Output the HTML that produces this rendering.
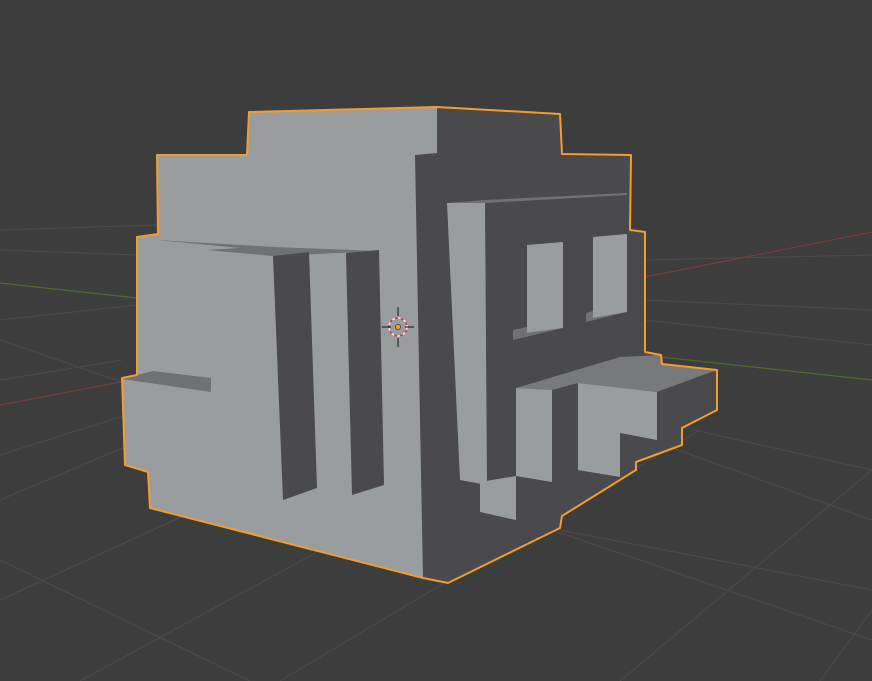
<!DOCTYPE html>
<html><head><meta charset="utf-8"><style>
html,body{margin:0;padding:0;background:#3d3d3d;}
svg{display:block}
</style></head><body>
<svg width="872" height="681" viewBox="0 0 872 681" xmlns="http://www.w3.org/2000/svg">
<rect width="872" height="681" fill="#3d3d3d"/>
<g stroke="#4b4b4b" stroke-width="1" fill="none">
<line x1="0" y1="500" x2="400" y2="330"/>
<line x1="0" y1="455" x2="300" y2="360"/>
<line x1="0" y1="600" x2="480" y2="380"/>
<line x1="80" y1="681" x2="560" y2="420"/>
<line x1="280" y1="681" x2="700" y2="430"/>
<line x1="620" y1="681" x2="872" y2="470"/>
<line x1="820" y1="681" x2="872" y2="610"/>
<line x1="0" y1="340" x2="872" y2="640"/>
<line x1="0" y1="560" x2="250" y2="681"/>
<line x1="650" y1="420" x2="872" y2="470"/>
<line x1="650" y1="440" x2="872" y2="520"/>
<line x1="560" y1="530" x2="872" y2="590"/>
<line x1="645" y1="300" x2="872" y2="310"/>
<line x1="645" y1="320" x2="872" y2="345"/>
<line x1="645" y1="260" x2="872" y2="255"/>
<line x1="0" y1="250" x2="137" y2="255"/>
<line x1="0" y1="320" x2="137" y2="305"/>
<line x1="0" y1="380" x2="122" y2="360"/>
<line x1="0" y1="230" x2="157" y2="225"/>
</g>
<line x1="0" y1="405" x2="210" y2="365" stroke="#7a3a3f" stroke-width="1.2"/>
<line x1="645" y1="277" x2="872" y2="232" stroke="#7a3a3f" stroke-width="1.2"/>
<line x1="0" y1="283" x2="137" y2="298" stroke="#4f6a2e" stroke-width="1.2"/>
<line x1="578" y1="348" x2="872" y2="380" stroke="#4f6a2e" stroke-width="1.2"/>

<!-- dark base (whole silhouette) -->
<polygon fill="#4a494b" points="249,112 437,107 560,114 562,154 631,155 630,230 645,232 645,352 661,355 662,364 717,370 717,410 682,428 682,445 636,462 636,470 562,516 560,528 448,583 423,578 150,508 148,472 125,465 122,378 137,375 137,237 158,234 157,155 247,155"/>
<!-- light left face -->
<polygon fill="#9a9d9f" points="249,112 437,107 437,153 415,155 423,578 150,508 148,472 125,465 122,378 137,375 137,237 158,234 157,155 247,155"/>
<!-- ledge shadows left -->
<polygon fill="#6f7173" points="156,240 275,247 378,251 382,251 273,256 206,250 240,248"/>
<polygon fill="#6f7173" points="122,379 153,371 211,378 211,392"/>
<!-- slots -->
<polygon fill="#4a494b" points="273,256 309,252 317,488 283,500"/>
<polygon fill="#4a494b" points="346,253 379,250 384,485 352,495"/>
<!-- right side pillar -->
<polygon fill="#6f7173" points="447,203 485,200 627,193 627,195 485,203"/>
<polygon fill="#9a9d9f" points="447,203 485,203 487,485 460,480"/>
<!-- windows -->
<polygon fill="#9a9d9f" points="527,245 563,242 563,328 527,333"/>
<polygon fill="#9a9d9f" points="593,237 627,234 627,312 593,318"/>
<polygon fill="#6f7173" points="513,330 527,327 527,333 563,328 513,340"/>
<polygon fill="#6f7173" points="586,313 593,311 593,318 627,312 586,322"/>
<!-- lower box -->
<polygon fill="#77797b" points="516,388 620,357 661,355 662,364 717,370 657,392 578,383 552,390"/>
<polygon fill="#4a494b" points="657,392 717,370 717,410 682,428 657,440"/>
<polygon fill="#9a9d9f" points="516,388 552,390 552,482 516,476"/>
<polygon fill="#9a9d9f" points="578,383 657,392 657,440 620,433 620,477 578,470"/>
<polygon fill="#9a9d9f" points="480,482 516,476 516,520 480,512"/>
<!-- outline -->
<polygon fill="none" stroke="#f29d2e" stroke-width="2" stroke-linejoin="round" points="249,112 437,107 560,114 562,154 631,155 630,230 645,232 645,352 661,355 662,364 717,370 717,410 682,428 682,445 636,462 636,470 562,516 560,528 448,583 423,578 150,508 148,472 125,465 122,378 137,375 137,237 158,234 157,155 247,155"/>
<!-- 3D cursor -->
<g transform="translate(398,327)">
<circle r="9" fill="none" stroke="#e8e8e8" stroke-width="1.6" stroke-dasharray="3 3"/>
<circle r="9" fill="none" stroke="#d04040" stroke-width="1.6" stroke-dasharray="3 3" stroke-dashoffset="3"/>
<line x1="0" y1="-20" x2="0" y2="-11" stroke="#111" stroke-width="1"/>
<line x1="0" y1="11" x2="0" y2="20" stroke="#111" stroke-width="1"/>
<line x1="-16" y1="0" x2="-7" y2="0" stroke="#111" stroke-width="1"/>
<line x1="7" y1="0" x2="16" y2="0" stroke="#111" stroke-width="1"/>
<circle r="2.6" fill="#f29d2e" stroke="#222" stroke-width="0.6"/>
</g>
</svg>
</body></html>
